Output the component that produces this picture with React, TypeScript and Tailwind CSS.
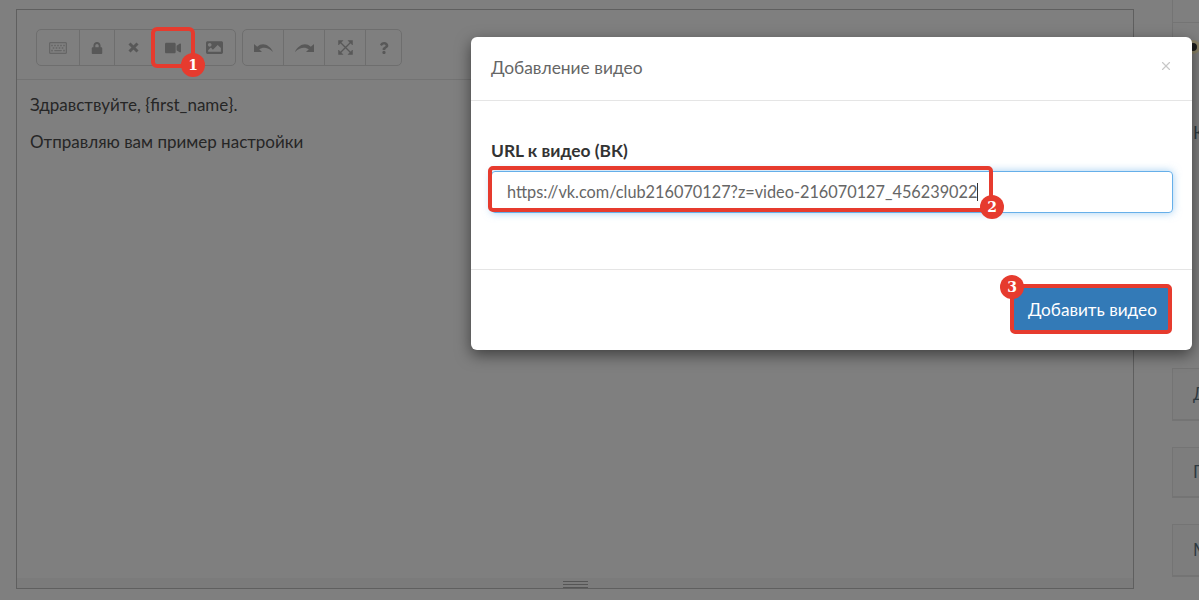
import { FaRegKeyboard, FaLock, FaVideo, FaImage, FaQuestion } from "react-icons/fa";
import { X } from "lucide-react";
import type { ReactNode } from "react";

function ToolButton({ w, children }: { w: string; children: ReactNode }) {
  return (
    <div className={`${w} flex h-full items-center justify-center border-r border-[#6e6e6e] last:border-r-0 text-[#585858]`}>
      {children}
    </div>
  );
}

function Badge({ n, className }: { n: number; className: string }) {
  return (
    <div className={`absolute flex h-[24px] w-[24px] items-center justify-center rounded-full bg-[#e63b2e] font-['DejaVu_Serif',serif] text-[14px] font-bold text-white ${className}`}>
      {n}
    </div>
  );
}

function SideCard({ h, letter }: { h: string; letter: string }) {
  return (
    <div className={`${h} flex items-center border border-b-2 border-[#747474] bg-[#7d7d7d] pl-[20px] text-[17px] text-[#2f3a42]`}>
      {letter}
    </div>
  );
}

// summernote style curved arrow, flipped for redo
function CurveArrow({ flip }: { flip?: boolean }) {
  return (
    <svg width="19" height="10" viewBox="0 0 19 10" className={flip ? "-scale-x-100" : ""} fill="currentColor">
      <path d="M0 1 L0 9 L8 9 L5.2 6.2 C8.5 3.8 14 3.8 19 9 C16 2 8.5 -1.5 3.2 3.8 Z" />
    </svg>
  );
}

function CloseGlyph() {
  return (
    <svg width="11" height="11" viewBox="0 0 11 11" stroke="currentColor" strokeWidth="3">
      <path d="M1.5 1.5 L9.5 9.5 M9.5 1.5 L1.5 9.5" />
    </svg>
  );
}

function ExpandGlyph() {
  return (
    <svg width="15" height="15" viewBox="0 0 15 15" fill="currentColor" stroke="currentColor">
      <path d="M2 2 L13 13 M13 2 L2 13" strokeWidth="1.3" />
      <path d="M0.5 0.5 H5 L0.5 5 Z M14.5 0.5 V5 L10 0.5 Z M0.5 14.5 V10 L5 14.5 Z M14.5 14.5 H10 L14.5 10 Z" strokeWidth="0.5" />
    </svg>
  );
}

export default function App() {
  return (
    <div className="relative flex h-[600px] w-[1199px] overflow-hidden bg-[#7f7f7f] font-['Lato','Liberation_Sans',sans-serif]">
      {/* editor */}
      <div className="ml-[16px] mt-[9px] flex h-[580px] w-[1118px] shrink-0 flex-col border border-[#5f5f5f]">
        <div className="flex h-[70px] shrink-0 items-start gap-[6px] border-b border-[#737373] pl-[19px] pt-[19px]">
          <div className="flex h-[37px] rounded-[5px] border border-[#6e6e6e]">
            <ToolButton w="w-[43px]"><FaRegKeyboard size={18} className="text-[#666]" /></ToolButton>
            <ToolButton w="w-[35px]"><FaLock size={12} /></ToolButton>
            <ToolButton w="w-[38px]"><CloseGlyph /></ToolButton>
            <ToolButton w="w-[41px]"><FaVideo size={16} /></ToolButton>
            <ToolButton w="w-[41px]"><FaImage size={17} /></ToolButton>
          </div>
          <div className="flex h-[37px] rounded-[5px] border border-[#6e6e6e]">
            <ToolButton w="w-[41px]"><CurveArrow /></ToolButton>
            <ToolButton w="w-[41px]"><CurveArrow flip /></ToolButton>
            <ToolButton w="w-[41px]"><ExpandGlyph /></ToolButton>
            <ToolButton w="w-[35px]"><FaQuestion size={12} /></ToolButton>
          </div>
        </div>
        <div className="flex-1 pl-[13px] pt-[15px] text-[17px] leading-[20px] text-[#262626]">
          <p className="mb-[17px]">Здравствуйте, {"{first_name}"}.</p>
          <p>Отправляю вам пример настройки</p>
        </div>
        <div className="flex h-[10px] shrink-0 flex-col items-center justify-end gap-[2px] bg-[#7b7b7b]">
          <div className="h-px w-[25px] bg-[#555]" />
          <div className="h-px w-[25px] bg-[#555]" />
          <div className="h-px w-[25px] bg-[#555]" />
        </div>
      </div>

      {/* right column, mostly hidden behind the modal */}
      <div className="ml-[38px] flex w-[200px] shrink-0 flex-col">
        <div className="h-[23px] border-b border-l border-[#747474]" />
        <div className="h-[14px] border-l border-[#747474]" />
        <div className="ml-[14px] mt-[3px] h-[14px] w-[14px] rounded-full border-[3px] border-[#8a8266] bg-[#1c1c1c]" />
        <div className="ml-[21px] mt-[69px] text-[17px] leading-[20px] text-[#2f3a42]">К</div>
        <div className="mt-[225px] flex flex-col gap-[26px]">
          <SideCard h="h-[53px]" letter="Д" />
          <SideCard h="h-[51px]" letter="П" />
          <SideCard h="h-[53px]" letter="М" />
        </div>
      </div>

      {/* modal */}
      <div className="absolute left-[471px] top-[37px] flex h-[313px] w-[721px] flex-col rounded-[6px] bg-white shadow-[0_5px_15px_rgba(0,0,0,0.5)]">
        <div className="flex h-[64px] shrink-0 items-center justify-between border-b border-[#e5e5e5] pl-[20px] pr-[19px]">
          <span className="text-[17.4px] text-[#666]">Добавление видео</span>
          <X size={14} strokeWidth={2} className="mb-[6px] text-[#c8c8c8]" />
        </div>
        <div className="flex-1 pl-[20px] pr-[19px] pt-[40px]">
          <div className="mb-[10px] text-[17.4px] font-bold leading-[20px] text-[#333]">URL к видео (ВК)</div>
          <div className="flex h-[42px] items-center rounded-[4px] border border-[#66afe9] pl-[15px] text-[16.3px] text-[#666] shadow-[0_0_8px_rgba(102,175,233,0.6)]">
            https://vk.com/club216070127?z=video-216070127_456239022
            <span className="h-[18px] w-px bg-[#333]" />
          </div>
        </div>
        <div className="flex h-[81px] shrink-0 items-start justify-end border-t border-[#e5e5e5] pr-[20px] pt-[14px]">
          <div className="flex h-[50px] w-[162px] items-center justify-center rounded-[5px] border-[4px] border-[#e63b2e] bg-[#337ab7] pl-[3px] pt-[1px] text-[17.2px] text-white">
            Добавить видео
          </div>
        </div>
      </div>

      {/* annotations */}
      <div className="absolute left-[151px] top-[27px] h-[41px] w-[44px] rounded-[6px] border-[4px] border-[#e63b2e]" />
      <Badge n={1} className="left-[181px] top-[53px]" />
      <div className="absolute left-[488px] top-[166px] h-[46px] w-[505px] rounded-[5px] border-[4px] border-[#e63b2e]" />
      <Badge n={2} className="left-[980px] top-[195px]" />
      <Badge n={3} className="left-[1000px] top-[275px]" />
    </div>
  );
}
